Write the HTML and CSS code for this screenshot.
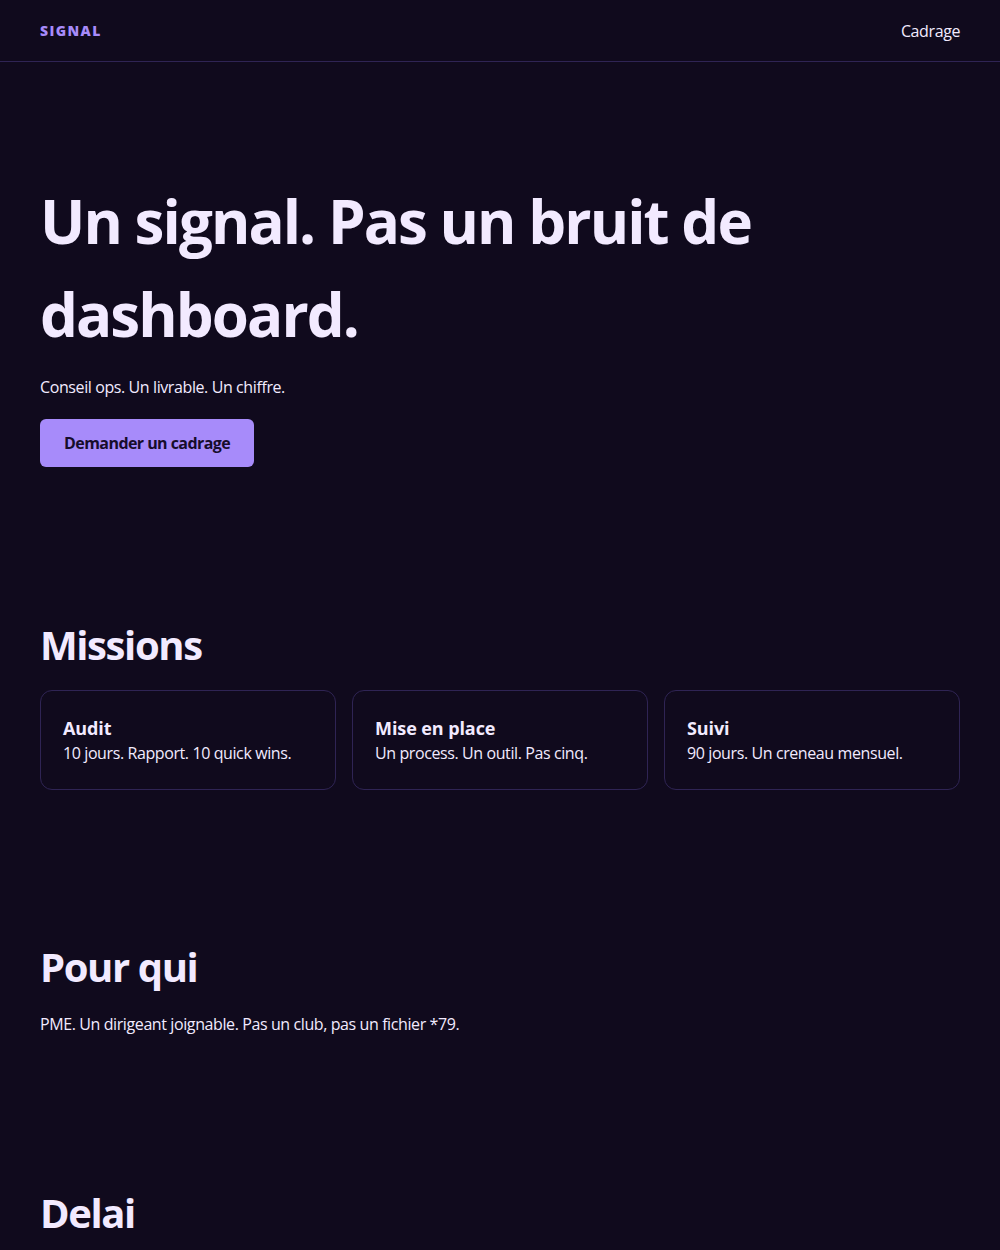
FILE: index.html
```html
<!DOCTYPE html>
<html lang="fr">
<head>
<meta charset="utf-8">
<title>Signal</title>
<link rel="stylesheet" href="styles.css">
</head>
<body>
<header class="nav">
  <div class="logo">SIGNAL</div>
  <a class="nav-link" href="#">Cadrage</a>
</header>
<main>
  <section class="hero">
    <h1>Un signal. Pas un bruit de dashboard.</h1>
    <p class="lead">Conseil ops. Un livrable. Un chiffre.</p>
    <a class="btn" href="#">Demander un cadrage</a>
  </section>
  <section class="block">
    <h2>Missions</h2>
    <div class="cards">
      <div class="card"><h3>Audit</h3><p>10 jours. Rapport. 10 quick wins.</p></div>
      <div class="card"><h3>Mise en place</h3><p>Un process. Un outil. Pas cinq.</p></div>
      <div class="card"><h3>Suivi</h3><p>90 jours. Un creneau mensuel.</p></div>
    </div>
  </section>
  <section class="block">
    <h2>Pour qui</h2>
    <p>PME. Un dirigeant joignable. Pas un club, pas un fichier *79.</p>
  </section>
  <section class="block">
    <h2>Delai</h2>
    <p>Cadrage sous 48h.</p>
  </section>
</main>
</body>
</html>
```
FILE: styles.css
```css
* { box-sizing: border-box; }
html, body { margin: 0; padding: 0; }
body {
  background: #100a1d;
  color: #f2eaff;
  font-family: "Open Sans", "Noto Sans", sans-serif;
  font-size: 16px;
  line-height: 1.5;
  letter-spacing: -0.025em;
}
a { text-decoration: none; color: inherit; }
.nav {
  height: 62px;
  display: flex;
  align-items: center;
  justify-content: space-between;
  padding: 0 40px;
  border-bottom: 1px solid #2f2454;
}
.logo {
  font-weight: 800;
  font-size: 14px;
  letter-spacing: 0.1em;
  color: #a78bfa;
}
.nav-link { font-size: 16px; color: #f2eaff; }
main { padding: 0 40px; }
.hero { padding: 113px 0 150px; }
h1 {
  margin: 0;
  font-size: 60px;
  line-height: 1.55;
  font-weight: 700;
  letter-spacing: -0.032em;
}
.lead { margin: 14px 0 20px; }
.btn {
  display: inline-block;
  background: #a78bfa;
  color: #170d2b;
  font-weight: 700;
  padding: 12px 24px;
  border-radius: 6px;
  letter-spacing: -0.035em;
}
.block { padding: 0 0 149px; }
h2 {
  margin: 0 0 17px;
  font-size: 40px;
  line-height: 1.4;
  font-weight: 700;
  letter-spacing: -0.035em;
}
.block p { margin: 0; }
.cards {
  display: grid;
  grid-template-columns: repeat(3, 1fr);
  gap: 16px;
}
.card {
  border: 1px solid #2f2454;
  border-radius: 12px;
  padding: 24px 22px;
}
.card h3 {
  margin: 0;
  font-size: 18px;
  font-weight: 700;
  line-height: 26px;
  letter-spacing: -0.005em;
}
.card p { margin: 0; }
```
